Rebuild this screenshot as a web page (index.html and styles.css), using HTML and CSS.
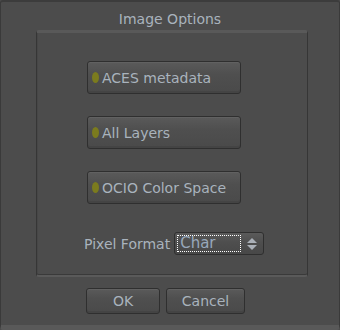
FILE: index.html
```html
<!DOCTYPE html>
<html lang="en">

<head>
    <meta charset="UTF-8">
    <title>Image Options</title>
    <link rel="stylesheet" href="styles.css">
</head>

<body>
    <div class="window">
        <div class="title">Image Options</div>

        <div class="frame">
            <button class="light-btn"><span class="light"></span>ACES metadata</button>
            <button class="light-btn"><span class="light"></span>All Layers</button>
            <button class="light-btn"><span class="light"></span>OCIO Color Space</button>

            <div class="format-row">
                <label class="format-label">Pixel Format</label>
                <div class="choice">
                    <span class="choice-text">Char</span>
                    <svg class="choice-arrows" width="10" height="12" viewBox="0 0 10 12">
                        <path d="M5 0 L10 5 L0 5 Z" fill="#aab0b8"/>
                        <path d="M5 12 L10 7 L0 7 Z" fill="#aab0b8"/>
                    </svg>
                </div>
            </div>
        </div>

        <div class="actions">
            <button class="btn btn-ok">OK</button>
            <button class="btn btn-cancel">Cancel</button>
        </div>
    </div>
</body>

</html>
```
FILE: styles.css
```css
/* General */
body {
    margin: 0;
    padding: 0;
    background-color: #4c4c4c;
    font-family: "DejaVu Sans", sans-serif;
    color: #a9b3bd;
}

.window {
    width: 340px;
    height: 330px;
    box-sizing: border-box;
    border: 1px solid #3a3a3a;
    border-top: 2px solid #3c3c3c;
    border-bottom: 5px solid #595959;
    border-radius: 3px;
    background-color: #4c4c4c;
    display: flex;
    flex-direction: column;
}

.title {
    text-align: center;
    font-size: 14px;
    height: 26px;
    padding-top: 8px;
    box-sizing: border-box;
    line-height: 18px;
}

/* Inner frame */
.frame {
    margin: 2px 0 0 35px;
    width: 272px;
    height: 247px;
    box-sizing: border-box;
    border: 1px solid #363636;
    border-top: 3px solid #595959;
    border-bottom: 2px solid #5a5a5a;
    border-radius: 3px;
    box-shadow: inset 0 -1px 0 #3a3a3a, inset 1px 0 0 #474747;
    display: flex;
    flex-direction: column;
    padding: 28px 0 0 50px;
}

.light-btn {
    width: 154px;
    height: 33px;
    margin-bottom: 22px;
    padding: 0 0 0 4px;
    display: flex;
    align-items: center;
    gap: 3px;
    font-family: "DejaVu Sans", sans-serif;
    font-size: 14px;
    color: #a9b3bd;
    border: 1px solid #2f2f2f;
    border-radius: 3px;
    background: linear-gradient(#5a5a5a, #4f4f4f 40%, #4a4a4a);
    box-shadow: inset 0 1px 0 #616161, inset 0 -2px 0 #444;
}

.light {
    width: 7px;
    height: 11px;
    border-radius: 50%;
    background-color: #7b7b1e;
}

/* Pixel format choice */
.format-row {
    display: flex;
    align-items: center;
    margin: 6px 0 0 -3px;
    gap: 4px;
    font-size: 14px;
}

.format-label {
    color: #a9b3bd;
}

.choice {
    width: 90px;
    height: 23px;
    box-sizing: border-box;
    border: 1px solid #2f2f2f;
    border-radius: 3px;
    background: linear-gradient(#5a5a5a, #4e4e4e 45%, #484848);
    display: flex;
    align-items: center;
    padding: 0 6px 0 2px;
}

.choice-text {
    width: 60px;
    height: 15px;
    line-height: 15px;
    border: 1px dotted #ffffff;
    padding-left: 2px;
    font-size: 15px;
    color: #98a8bb;
}

.choice-arrows {
    margin-left: auto;
}

/* Bottom buttons */
.actions {
    display: flex;
    gap: 6px;
    margin: 11px 0 0 85px;
}

.btn {
    height: 26px;
    font-family: "DejaVu Sans", sans-serif;
    font-size: 14px;
    color: #a9b3bd;
    border: 1px solid #2f2f2f;
    border-radius: 3px;
    background: linear-gradient(#5a5a5a, #4f4f4f 40%, #4a4a4a);
    box-shadow: inset 0 1px 0 #616161, inset 0 -2px 0 #444;
    padding: 0;
}

.btn-ok {
    width: 74px;
}

.btn-cancel {
    width: 79px;
}
```
